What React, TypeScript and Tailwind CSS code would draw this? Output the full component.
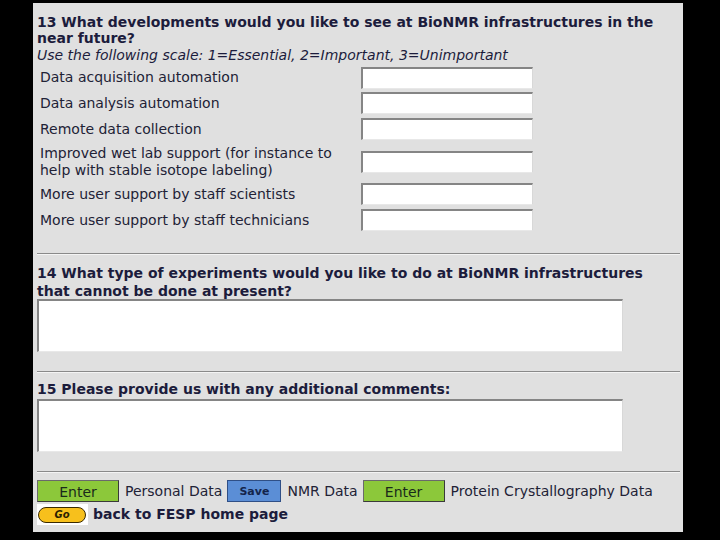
import React from "react";

const font = { fontFamily: '"DejaVu Sans", Verdana, sans-serif' };

function Inset({ className }: { className: string }) {
  return (
    <div
      className={
        "bg-white border-t-2 border-l-2 border-r border-b border-t-[#858585] border-l-[#858585] border-r-[#d8d8d8] border-b-[#e8e8e8] " +
        className
      }
    />
  );
}

function Hr() {
  return <div className="ml-[4px] mr-[3px] h-[2px] border-t border-t-[#8a8a8a] border-b border-b-[#f4f4f4]" />;
}

const rows: { label: React.ReactNode; h: string }[] = [
  { label: "Data acquisition automation", h: "h-[25px]" },
  { label: "Data analysis automation", h: "h-[26px]" },
  { label: "Remote data collection", h: "h-[26px]" },
  {
    label: (
      <>
        Improved wet lab support (for instance to
        <br />
        help with stable isotope labeling)
      </>
    ),
    h: "h-[39px]",
  },
  { label: "More user support by staff scientists", h: "h-[26px]" },
  { label: "More user support by staff technicians", h: "h-[26px]" },
];

export default function App() {
  return (
    <div className="w-[720px] h-[540px] bg-black overflow-hidden" style={font}>
      <div className="ml-[33px] mt-[3px] w-[650px] h-[529px] bg-[#e0e0e0] text-[#1c1c3c] flex flex-col">
        <div className="pl-[4px] pt-[11px]">
          <div className="font-bold text-[14px] leading-[16px] whitespace-nowrap">
            13 What developments would you like to see at BioNMR infrastructures in the
            <br />
            near future?
          </div>
          <div className="italic text-[14px] leading-[17px] mt-[1px] whitespace-nowrap">
            Use the following scale: 1=Essential, 2=Important, 3=Unimportant
          </div>
          <div className="flex flex-col mt-[1px]">
            {rows.map((r, i) => (
              <div key={i} className={"flex items-center " + r.h}>
                <div className="w-[324px] pl-[3px] text-[14px] leading-[17px] text-[#222236] whitespace-nowrap">{r.label}</div>
                <Inset className="w-[172px] h-[22px]" />
              </div>
            ))}
          </div>
        </div>
        <div className="h-[20px]" />
        <Hr />
        <div className="pl-[4px] pt-[9px]">
          <div className="font-bold text-[14px] leading-[18px] whitespace-nowrap">
            14 What type of experiments would you like to do at BioNMR infrastructures
            <br />
            that cannot be done at present?
          </div>
          <Inset className="w-[586px] h-[53px] mt-[-1px]" />
        </div>
        <div className="h-[19px]" />
        <Hr />
        <div className="pl-[4px] pt-[8px]">
          <div className="font-bold text-[14px] leading-[17px]">15 Please provide us with any additional comments:</div>
          <Inset className="w-[586px] h-[53px] mt-[1px]" />
        </div>
        <div className="h-[19px]" />
        <Hr />
        <div className="pl-[4px] pt-[7px] flex items-center text-[14px] text-[#222236]">
          <div className="w-[82px] h-[22px] bg-[#8cc83a] border border-t-[#6a6a6a] border-l-[#6a6a6a] border-r-[#3a3a3a] border-b-[#3a3a3a] flex items-center justify-center text-[14px] text-[#1a2a1a] pt-[2px]">
            Enter
          </div>
          <span className="ml-[6px]">Personal Data</span>
          <div className="ml-[5px] w-[54px] h-[22px] bg-[#5b8ed6] border border-[#2f4f86] flex items-center justify-center font-bold text-[11px] text-[#14244a] pt-[2px]">
            Save
          </div>
          <span className="ml-[6px]">NMR Data</span>
          <div className="ml-[5px] w-[82px] h-[22px] bg-[#8cc83a] border border-t-[#6a6a6a] border-l-[#6a6a6a] border-r-[#3a3a3a] border-b-[#3a3a3a] flex items-center justify-center text-[14px] text-[#1a2a1a] pt-[2px]">
            Enter
          </div>
          <span className="ml-[6px]">Protein Crystallography Data</span>
        </div>
        <div className="pl-[4px] mt-[2px] flex items-center">
          <div className="w-[51px] h-[21px] bg-white flex items-center pl-[1px]">
            <div className="w-[48px] h-[16px] rounded-full bg-[#f7c01c] border border-[#3a2a00] flex items-center justify-center italic font-bold text-[10px] text-[#2a2000]">
              Go
            </div>
          </div>
          <span className="ml-[5px] font-bold text-[14px] text-[#1c1c3c]">back to FESP home page</span>
        </div>
      </div>
    </div>
  );
}
